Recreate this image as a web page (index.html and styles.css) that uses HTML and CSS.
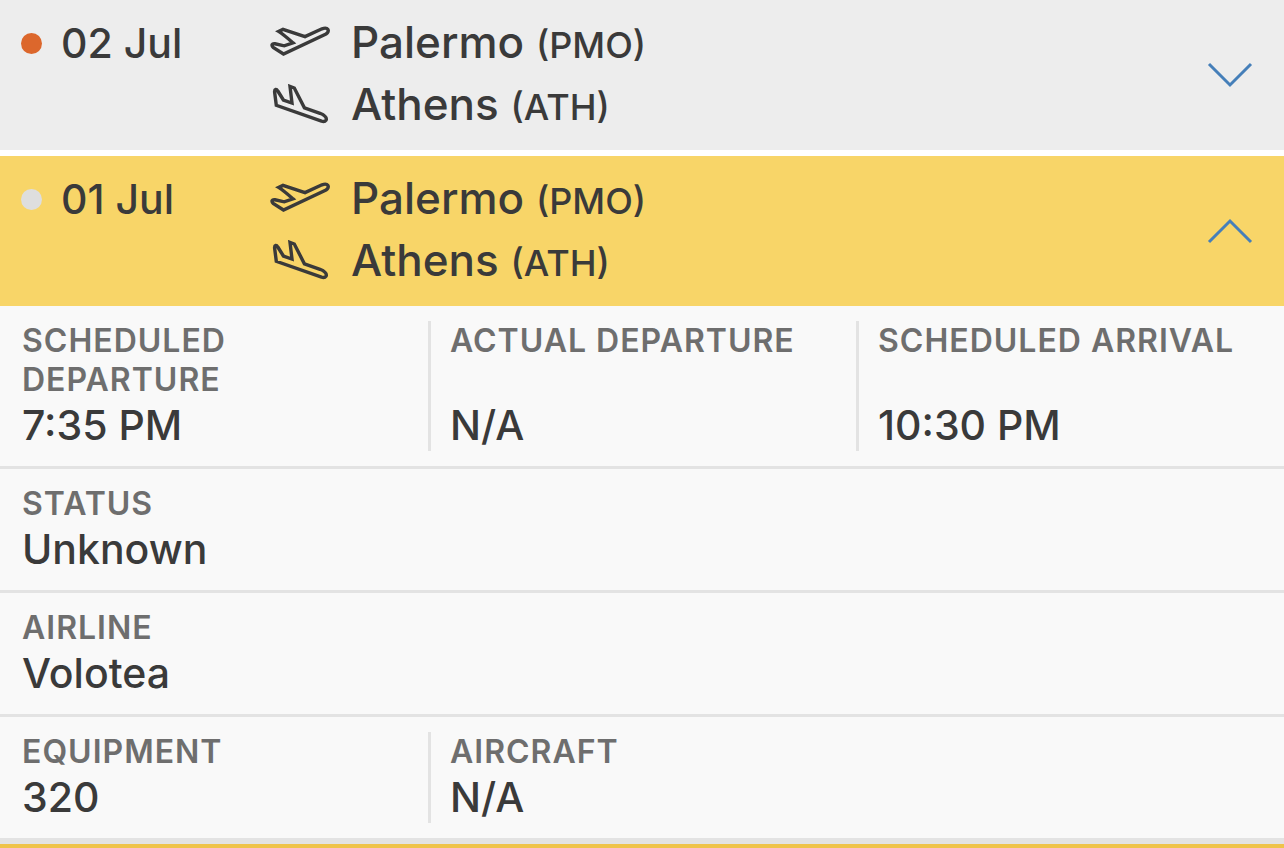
FILE: index.html
```html
<!DOCTYPE html>
<html lang="en">
<head>
    <meta charset="UTF-8">
    <meta name="viewport" content="width=device-width, initial-scale=1.0">
    <title>Flight History</title>
    <link rel="stylesheet" href="styles.css">
</head>
<body>
    <svg class="sprite" aria-hidden="true">
        <symbol id="takeoff" viewBox="0 0 64 40">
            <path d="M6.2 25.5 C4 23 5 21.4 8 21.8 L17.2 23.8 L26 20.9 C21 16.5 16.5 12.5 11.6 9.4 L16 7.4 L38 14.6 L55 6.8 C61 4.6 63.5 9 59 12 L16.5 32 Z"/>
        </symbol>
        <symbol id="landing" viewBox="0 0 64 40">
            <path d="M9.3 21.3 L7.6 8 C7.4 5 9.4 4.6 10.8 7 L16.4 16 L25 19 L23 2.4 L27.3 4 L37.4 23.8 L53 29.3 C62 33 60.5 38.8 54.5 37.2 Z"/>
        </symbol>
    </svg>

    <main class="flights">
        <section class="flight">
            <button class="flight-header" type="button" aria-expanded="false">
                <span class="date"><span class="dot dot-active"></span>02 Jul</span>
                <span class="route">
                    <span class="stop"><svg class="plane"><use href="#takeoff"/></svg><span>Palermo <span class="code">(PMO)</span></span></span>
                    <span class="stop"><svg class="plane"><use href="#landing"/></svg><span>Athens <span class="code">(ATH)</span></span></span>
                </span>
                <svg class="chevron" viewBox="0 0 46 30"><path d="M2 6 L23 27 L44 6"/></svg>
            </button>
        </section>

        <section class="flight">
            <button class="flight-header open" type="button" aria-expanded="true" aria-controls="details">
                <span class="date"><span class="dot"></span>01 Jul</span>
                <span class="route">
                    <span class="stop"><svg class="plane"><use href="#takeoff"/></svg><span>Palermo <span class="code">(PMO)</span></span></span>
                    <span class="stop"><svg class="plane"><use href="#landing"/></svg><span>Athens <span class="code">(ATH)</span></span></span>
                </span>
                <svg class="chevron" viewBox="0 0 46 30"><path d="M2 28 L23 7 L44 28"/></svg>
            </button>
            <div class="details" id="details">
                <dl class="row">
                    <div class="cell"><dt>Scheduled Departure</dt><dd>7:35 PM</dd></div>
                    <div class="cell"><dt>Actual Departure</dt><dd>N/A</dd></div>
                    <div class="cell"><dt>Scheduled Arrival</dt><dd>10:30 PM</dd></div>
                </dl>
                <dl class="row">
                    <div class="cell"><dt>Status</dt><dd>Unknown</dd></div>
                </dl>
                <dl class="row">
                    <div class="cell"><dt>Airline</dt><dd>Volotea</dd></div>
                </dl>
                <dl class="row">
                    <div class="cell"><dt>Equipment</dt><dd>320</dd></div>
                    <div class="cell"><dt>Aircraft</dt><dd>N/A</dd></div>
                </dl>
            </div>
        </section>
    </main>
</body>
</html>
```
FILE: styles.css
```css
* {
    box-sizing: border-box;
}
body {
    margin: 0;
    font-family: Inter, "Liberation Sans", sans-serif;
    font-weight: 500;
    color: #3a3a3a;
    background: #fff;
}
.sprite {
    display: block;
    width: 0;
    height: 0;
}
.flights {
    display: flex;
    flex-direction: column;
    gap: 6px;
    border-bottom: 4px solid #efc34a;
}

/* Flight header */
.flight-header {
    display: grid;
    grid-template-columns: 246px 1fr auto;
    align-items: start;
    width: 100%;
    padding: 11px 31px 15px 21px;
    border: none;
    background: #ededed;
    color: inherit;
    font: inherit;
    text-align: left;
    cursor: pointer;
}
.flight-header.open {
    background: #f8d568;
}
.date {
    display: flex;
    align-items: center;
    gap: 19px;
    font-size: 41px;
    line-height: 64px;
}
.dot {
    width: 21px;
    height: 21px;
    border-radius: 50%;
    background: #dedede;
}
.dot-active {
    background: #dc672c;
}
.route {
    display: flex;
    flex-direction: column;
}
.stop {
    display: flex;
    align-items: center;
    gap: 20px;
    font-size: 44px;
    line-height: 62px;
}
.code {
    font-size: 36px;
    line-height: 1;
}
.plane {
    width: 64px;
    height: 40px;
    fill: none;
    stroke: #3a3a3a;
    stroke-width: 3.4;
}
.chevron {
    align-self: center;
    width: 46px;
    height: 30px;
    fill: none;
    stroke: #457fb9;
    stroke-width: 3;
}

/* Flight details */
.details {
    background: #f9f9f9;
    border-bottom: 3px solid #e3e3e3;
}
.row {
    display: grid;
    grid-template-columns: repeat(3, 1fr);
    margin: 0;
    padding: 15px 0;
    border-bottom: 3px solid #e3e3e3;
}
.cell {
    display: flex;
    flex-direction: column;
    justify-content: space-between;
    padding: 0 22px;
}
.cell + .cell {
    padding: 0 19px;
    border-left: 3px solid #e3e3e3;
}
dt {
    font-size: 32px;
    font-weight: 600;
    line-height: 39px;
    letter-spacing: 1px;
    text-transform: uppercase;
    color: #6e6e6e;
}
dd {
    margin: 0;
    font-size: 41px;
    line-height: 52px;
}
```
